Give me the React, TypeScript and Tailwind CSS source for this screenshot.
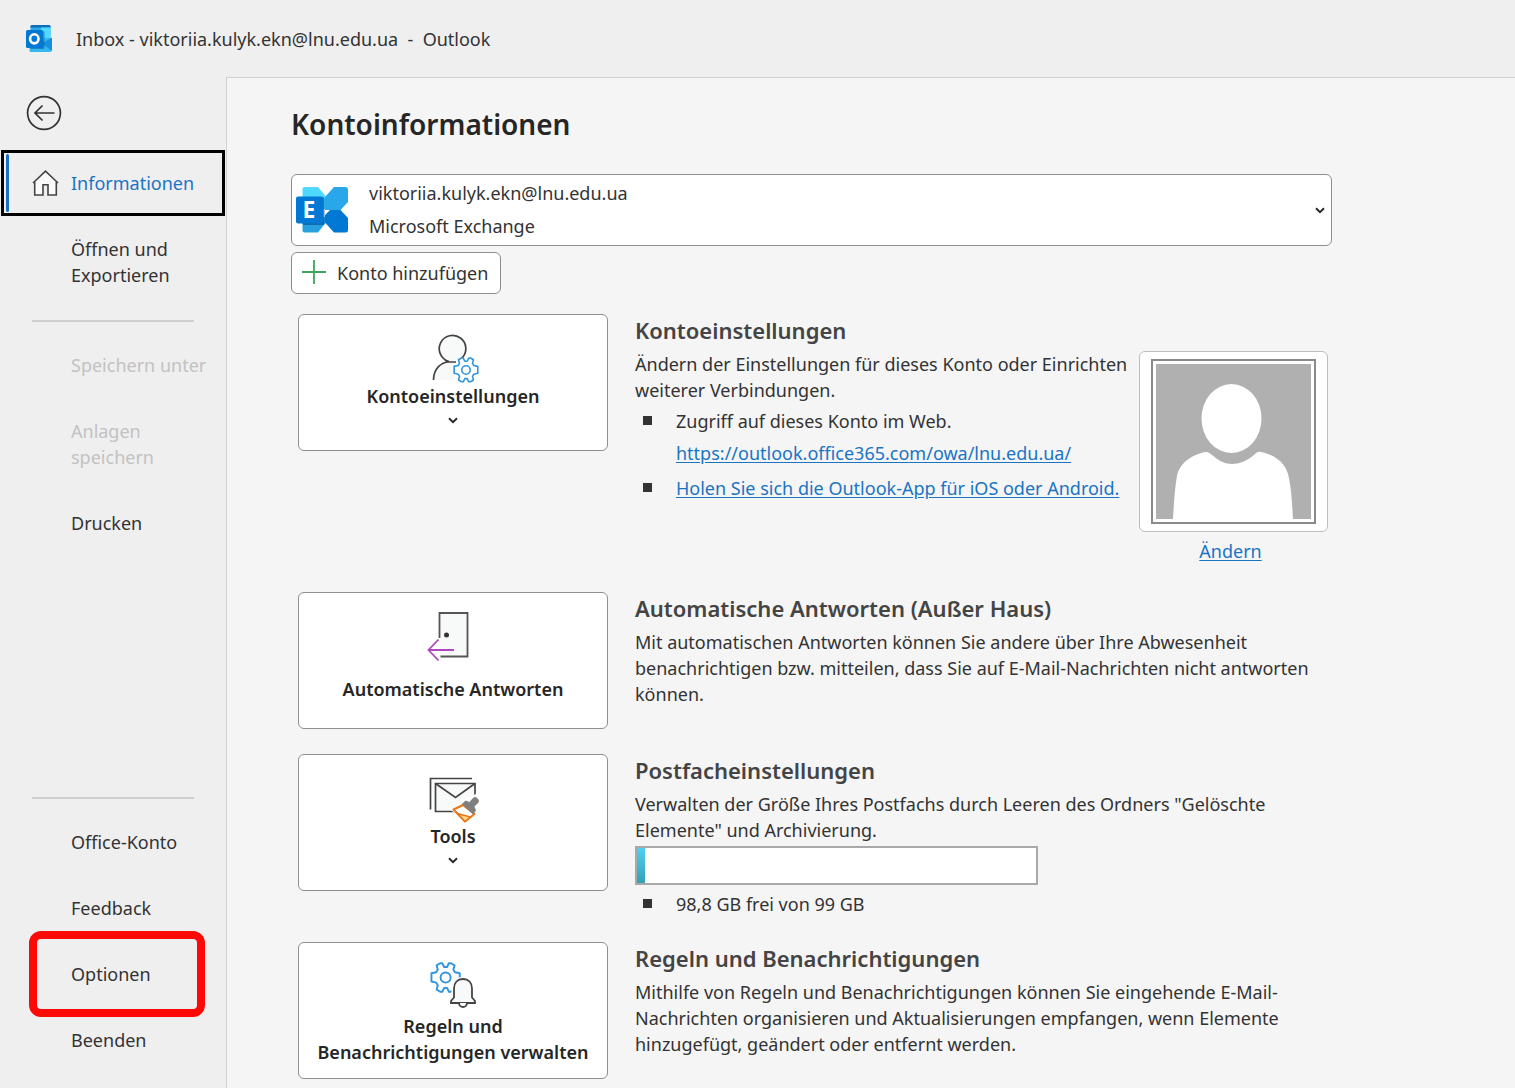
import type { ReactNode } from 'react';

const ACCOUNT = 'viktoriia.kulyk.ekn@lnu.edu.ua';

function OutlookLogo() {
  return (
    <svg width="27" height="27" viewBox="0 0 27 27" aria-hidden="true">
      <path d="M6 0h17a1.500 1.500 0 0 1 1.500 1.500V14H4.500V1.500A1.500 1.500 0 0 1 6 0z" fill="#28a8ea" />
      <path d="M6 0h17a1.500 1.500 0 0 1 1.500 1.500v1h-20v-1A1.500 1.500 0 0 1 6 0z" fill="#0f6cb8" />
      <path d="M15 2.500h9.500V13H15z" fill="#50d9ff" />
      <path d="M3.500 13h22v12.500A1.500 1.500 0 0 1 24 27H5a1.500 1.500 0 0 1-1.500-1.500z" fill="#35b8f1" />
      <path d="m16 18.500 10 7.500V12.500z" fill="#1490df" />
      <rect x="4" y="6" width="14.500" height="18" rx="1.500" fill="#0a4f8e" opacity=".5" />
      <rect x="0" y="5" width="17" height="18" rx="1.500" fill="#0078d4" />
      <ellipse cx="8.300" cy="13.800" rx="4.200" ry="4.600" fill="none" stroke="#fff" strokeWidth="2.600" />
    </svg>
  );
}

function ExchangeLogo() {
  return (
    <svg width="52" height="46" viewBox="0 0 52 46" aria-hidden="true">
      <path d="M8.500 0H22l8 9.500V22H6.500V2a2 2 0 0 1 2-2z" fill="#50d9ff" />
      <path d="M6.500 30H30v5.500l-8 10H8.500a2 2 0 0 1-2-2z" fill="#28a0e0" />
      <path d="M38 0h11.500A2.500 2.500 0 0 1 52 2.500V15l-7.500 8H29V10z" fill="#28a8ea" />
      <path d="M34 23h10.500l7.500 8v12a2.500 2.500 0 0 1-2.500 2.500H38l-9-10V28z" fill="#0078d4" />
      <rect x="6.500" y="10" width="22" height="28" rx="2" fill="#0a5a9c" opacity=".75" />
      <rect x="0" y="9.500" width="27" height="27" rx="2" fill="#0078d4" />
      <text x="13" y="31" textAnchor="middle" fontSize="23" fontWeight="700" fill="#fff">
        E
      </text>
    </svg>
  );
}

function HomeIcon() {
  return (
    <svg width="27" height="26" viewBox="0 0 27 26" fill="none" stroke="#444" strokeWidth="1.600" aria-hidden="true">
      <path d="M2.500 11.500V25H11V14.500h5V25h8.500V11.500l-11-10z" fill="#fafafa" stroke="none" />
      <path d="M1 13 13.500 1.200 26 13M2.700 12v13H11V14.700h5V25h8.300V12" />
    </svg>
  );
}

function BackIcon() {
  return (
    <svg width="36" height="36" viewBox="0 0 36 36" fill="none" stroke="#333" strokeWidth="1.700" aria-hidden="true">
      <circle cx="18" cy="18" r="16.400" />
      <path d="M28.500 18h-19M16.500 10.500 9 18l7.500 7.500" />
    </svg>
  );
}

function Chevron() {
  return (
    <svg width="10" height="7" viewBox="0 0 10 7" fill="none" stroke="#262626" strokeWidth="1.900" aria-hidden="true">
      <path d="m1 1.300 4 3.900 4-3.900" />
    </svg>
  );
}

function PlusIcon() {
  return (
    <svg width="26" height="28" viewBox="0 0 26 28" fill="none" stroke="#3fa45b" strokeWidth="1.800" aria-hidden="true">
      <path d="M13 1v24M1 13h24" />
    </svg>
  );
}

// Six-toothed cog on a 26 x 26 box, shared by two tiles
function Gear() {
  return (
    <g stroke="#2f95dc" strokeWidth="1.600" strokeLinejoin="round" fill="#fff">
      <path d="M8.500 1h1.700l1.600 3.200h2.400L15.800 1h1.700l3 1.800-1 3.400 1.300 2.300 4 .9v6.900l-4 .9-1.300 2.200 1 3.600-3 1.800h-1.700l-1.600-3.200h-2.400l-1.600 3.200H8.500l-3-1.800 1-3.600-1.300-2.200-4-.9V9.400l4-.9 1.300-2.300-1-3.400z" />
      <circle cx="13" cy="13" r="4.200" />
    </g>
  );
}

function AccountIcon() {
  return (
    <svg width="54" height="49" viewBox="-6 0 54 49" fill="none" stroke="#444" strokeWidth="1.700" aria-hidden="true">
      <path d="M1.500 46C1.500 35 9 28 17 28h6v18z" fill="#f8faf9" stroke="none" />
      <path d="M29.500 24.500A13.300 13.300 0 1 0 17 27.500" fill="#f8faf9" />
      <path d="M1.500 46C1.500 35 9 28 17 28h7M17 28c-2-.5-3-1-4-2" />
      <g transform="translate(21 23)">
        <Gear />
      </g>
    </svg>
  );
}

function DoorIcon() {
  return (
    <svg width="54" height="50" viewBox="-1 1 54 50" fill="none" aria-hidden="true">
      <path d="M12.500 1.500H41V46H12.500z" fill="#f8faf9" />
      <path d="M12.500 27V2h28v43.500H13.500" stroke="#555" strokeWidth="1.800" />
      <circle cx="19.500" cy="24" r="2.500" fill="#333" />
      <path d="M27 39H1.500M11.500 28.500 1.500 39l10 10.500" stroke="#b146c2" strokeWidth="1.800" />
    </svg>
  );
}

function MailToolsIcon() {
  return (
    <svg width="54" height="49" viewBox="-3 -3 54 49" fill="none" aria-hidden="true">
      <path d="M1.500 32.500V1.500H43" stroke="#444" strokeWidth="1.700" />
      <path d="M6.500 6.500H46V34.500H6.500z" fill="#f8faf9" stroke="#444" strokeWidth="1.700" />
      <path d="m6.500 6.500 20 14L46 6.500" stroke="#444" strokeWidth="1.700" />
      <path d="m22 33 11-10 14-6 5 5-3 14-10 11z" fill="#fff" />
      <path d="m34 28 11.500 9L36 44.500 24.500 32.500z" fill="#fff" stroke="#e8761a" strokeWidth="2" strokeLinejoin="round" />
      <path d="m28.500 36.500 13 3.500-5.500 4.500z" fill="#fbd78a" stroke="#e8761a" strokeWidth="1.600" />
      <path
        d="m33.500 27 3-3 4 1.500 4-4.500c2-2 6.500 2 4.500 4.500l-4 4 1.500 4-2.500 3.500z"
        fill="#7f7f7f"
        stroke="#7f7f7f"
        strokeLinejoin="round"
      />
    </svg>
  );
}

function RulesIcon() {
  return (
    <svg width="46" height="51" viewBox="0 0 46 51" aria-hidden="true">
      <g transform="scale(1.200)">
        <Gear />
      </g>
      <path d="M18.500 40l3-4V28c0-8 4-13 11-13h14v31h-28z" fill="#fff" />
      <path
        d="M21 41v-2l3-3.500v-9c0-6 3.500-9.500 9-9.500s9 3.500 9 9.500v9l3 3.500v2z"
        fill="#f8faf9"
        stroke="#444"
        strokeWidth="1.800"
      />
      <path d="M29 41a4 4 0 0 0 8 0" fill="#fff" stroke="#444" strokeWidth="1.800" />
    </svg>
  );
}

function Avatar() {
  return (
    <svg viewBox="0 0 155 155" className="block w-full" aria-hidden="true">
      <path d="M0 0h155v155H0z" fill="#b0b0b0" />
      <ellipse cx="75.500" cy="54.500" rx="30" ry="34.500" fill="#fff" />
      <path
        d="M17 155c1-18 2-32 4-43 3-15 18-22 28-24 3-.5 5 1 7 3 7 6 13 9 20 9s15-3 22-9c2-2 4-4 7-3 10 2 23 8 27 22 3 11 4 27 5 45z"
        fill="#fff"
      />
    </svg>
  );
}

function NavItem({
  children,
  icon,
  active,
  disabled,
  marked,
}: {
  children: ReactNode;
  icon?: ReactNode;
  active?: boolean;
  disabled?: boolean;
  marked?: boolean;
}) {
  return (
    <li className="relative">
      <button
        type="button"
        disabled={disabled}
        aria-current={active ? 'page' : undefined}
        className={
          active
            ? 'flex w-full items-center border-3 border-black py-[17px] text-left text-[#1a74c4]'
            : 'flex w-full items-center py-5 pl-[3px] text-left disabled:text-[#c2c2c2]'
        }
      >
        <span className="flex w-[67px] shrink-0 justify-end pr-3">{icon}</span>
        {children}
      </button>
      {active && <span className="absolute inset-y-1 left-[5px] w-[3px] rounded-full bg-[#1a6fc0]" />}
      {marked && (
        <span className="pointer-events-none absolute -inset-y-2.5 right-5 left-7 rounded-xl border-8 border-[#ff0808]" />
      )}
    </li>
  );
}

function Tile({ icon, label, menu }: { icon: ReactNode; label: ReactNode; menu?: boolean }) {
  return (
    <button
      type="button"
      className="flex h-[137px] w-[310px] shrink-0 flex-col items-center rounded-md border border-[#8f8f8f] bg-white pt-[19px] font-semibold text-[#262626]"
    >
      {icon}
      {label}
      {menu && (
        <span className="mt-2">
          <Chevron />
        </span>
      )}
    </button>
  );
}

function Section({
  tile,
  title,
  text,
  children,
  aside,
}: {
  tile: ReactNode;
  title: string;
  text: string;
  children?: ReactNode;
  aside?: ReactNode;
}) {
  return (
    <section className="flex items-start">
      {tile}
      <div className="ml-[27px] min-w-0 flex-1 pt-0.5">
        <h2 className="mb-[7px] text-[22px] leading-7 font-semibold text-[#444]">{title}</h2>
        <p>{text}</p>
        {children}
      </div>
      {aside}
    </section>
  );
}

function Bullet({ children }: { children: ReactNode }) {
  return (
    <li className="flex items-start whitespace-nowrap">
      <span className="mt-2 mr-6 ml-2 size-[9px] shrink-0 bg-[#333]" />
      <div>{children}</div>
    </li>
  );
}

export default function App() {
  return (
    <div className="flex min-h-screen flex-col bg-[#efefef] font-['Noto_Sans',sans-serif] text-[18px] leading-[26px] text-[#333]">
      <header className="flex h-[77px] items-center gap-[23px] pl-[26px]">
        <OutlookLogo />
        <span className="whitespace-pre">Inbox - {ACCOUNT}  -  Outlook</span>
      </header>

      <div className="flex flex-1">
        <nav className="flex w-[226px] shrink-0 flex-col px-px pb-[15px]" aria-label="Datei">
          <button type="button" aria-label="Zurück" className="flex h-[73px] items-center pb-0.5 pl-[25px]">
            <BackIcon />
          </button>
          <ul>
            <NavItem active icon={<HomeIcon />}>
              Informationen
            </NavItem>
            <NavItem>
              Öffnen und
              <br />
              Exportieren
            </NavItem>
          </ul>
          <hr className="mt-3 mr-[31px] mb-2.5 ml-[31px] border-t-2 border-[#cfcfcf]" />
          <ul>
            <NavItem disabled>Speichern unter</NavItem>
            <NavItem disabled>
              Anlagen
              <br />
              speichern
            </NavItem>
            <NavItem>Drucken</NavItem>
          </ul>
          <hr className="mt-auto mr-[31px] mb-2.5 ml-[31px] border-t-2 border-[#cfcfcf]" />
          <ul>
            <NavItem>Office-Konto</NavItem>
            <NavItem>Feedback</NavItem>
            <NavItem marked>Optionen</NavItem>
            <NavItem>Beenden</NavItem>
          </ul>
        </nav>

        <main className="min-w-0 flex-1 border-t border-l border-[#d2d2d2] bg-[#f5f5f5] pt-[26px] pr-8 pl-16">
          <div className="max-w-[1041px]">
            <h1 className="mb-[30px] text-[28px] leading-10 font-semibold text-[#262626]">Kontoinformationen</h1>

            <div className="flex h-[72px] items-center rounded-md border border-[#8f8f8f] bg-white pr-1.5 pl-1">
              <ExchangeLogo />
              <div className="ml-[21px] flex flex-1 flex-col gap-[7px] pb-0.5">
                <select aria-label="Konto" className="appearance-none bg-transparent">
                  <option>{ACCOUNT}</option>
                </select>
                <span>Microsoft Exchange</span>
              </div>
              <Chevron />
            </div>

            <button
              type="button"
              className="mt-1.5 flex h-[42px] items-center gap-2.5 rounded-md border border-[#8f8f8f] bg-white pr-3 pl-[9px]"
            >
              <PlusIcon />
              Konto hinzufügen
            </button>

            <div className="mt-5 flex flex-col gap-[25px] pb-2 pl-[7px]">
              <Section
                tile={<Tile icon={<AccountIcon />} label="Kontoeinstellungen" menu />}
                title="Kontoeinstellungen"
                text="Ändern der Einstellungen für dieses Konto oder Einrichten weiterer Verbindungen."
                aside={
                  <div className="mr-1 flex w-[189px] shrink-0 flex-col items-center pt-[37px] pb-[3px]">
                    <button
                      type="button"
                      aria-label="Foto ändern"
                      className="w-full rounded-md border border-[#bdbdbd] bg-white px-[11px] py-[7px]"
                    >
                      <span className="block border-2 border-[#8a8a8a] bg-white p-[3px]">
                        <Avatar />
                      </span>
                    </button>
                    <a href="#foto" className="mt-1.5 mr-1.5 text-[#1a74c4] underline underline-offset-2">
                      Ändern
                    </a>
                  </div>
                }
              >
                <ul className="mt-[5px] flex flex-col gap-[9px]">
                  <Bullet>
                    <p>Zugriff auf dieses Konto im Web.</p>
                    <a href="#owa" className="mt-1.5 block text-[#1a74c4] underline underline-offset-2">
                      https://outlook.office365.com/owa/lnu.edu.ua/
                    </a>
                  </Bullet>
                  <Bullet>
                    <a href="#app" className="text-[#1a74c4] underline underline-offset-2">
                      Holen Sie sich die Outlook-App für iOS oder Android.
                    </a>
                  </Bullet>
                </ul>
              </Section>

              <Section
                tile={
                  <Tile icon={<DoorIcon />} label={<span className="mt-3.5">Automatische Antworten</span>} />
                }
                title="Automatische Antworten (Außer Haus)"
                text="Mit automatischen Antworten können Sie andere über Ihre Abwesenheit benachrichtigen bzw. mitteilen, dass Sie auf E-Mail-Nachrichten nicht antworten können."
              />

              <Section
                tile={<Tile icon={<MailToolsIcon />} label="Tools" menu />}
                title="Postfacheinstellungen"
                text={'Verwalten der Größe Ihres Postfachs durch Leeren des Ordners "Gelöschte Elemente" und Archivierung.'}
              >
                <div className="mt-[3px] mb-1.5 h-[39px] w-[403px] border-2 border-[#a9a9a9] bg-white">
                  <div className="h-full w-2 bg-linear-to-b from-[#4fd0f0] to-[#35a0b8]" />
                </div>
                <ul>
                  <Bullet>98,8 GB frei von 99 GB</Bullet>
                </ul>
              </Section>

              <Section
                tile={
                  <Tile
                    icon={<RulesIcon />}
                    label={
                      <span>
                        Regeln und
                        <br />
                        Benachrichtigungen verwalten
                      </span>
                    }
                  />
                }
                title="Regeln und Benachrichtigungen"
                text="Mithilfe von Regeln und Benachrichtigungen können Sie eingehende E-Mail-Nachrichten organisieren und Aktualisierungen empfangen, wenn Elemente hinzugefügt, geändert oder entfernt werden."
              />
            </div>
          </div>
        </main>
      </div>
    </div>
  );
}
